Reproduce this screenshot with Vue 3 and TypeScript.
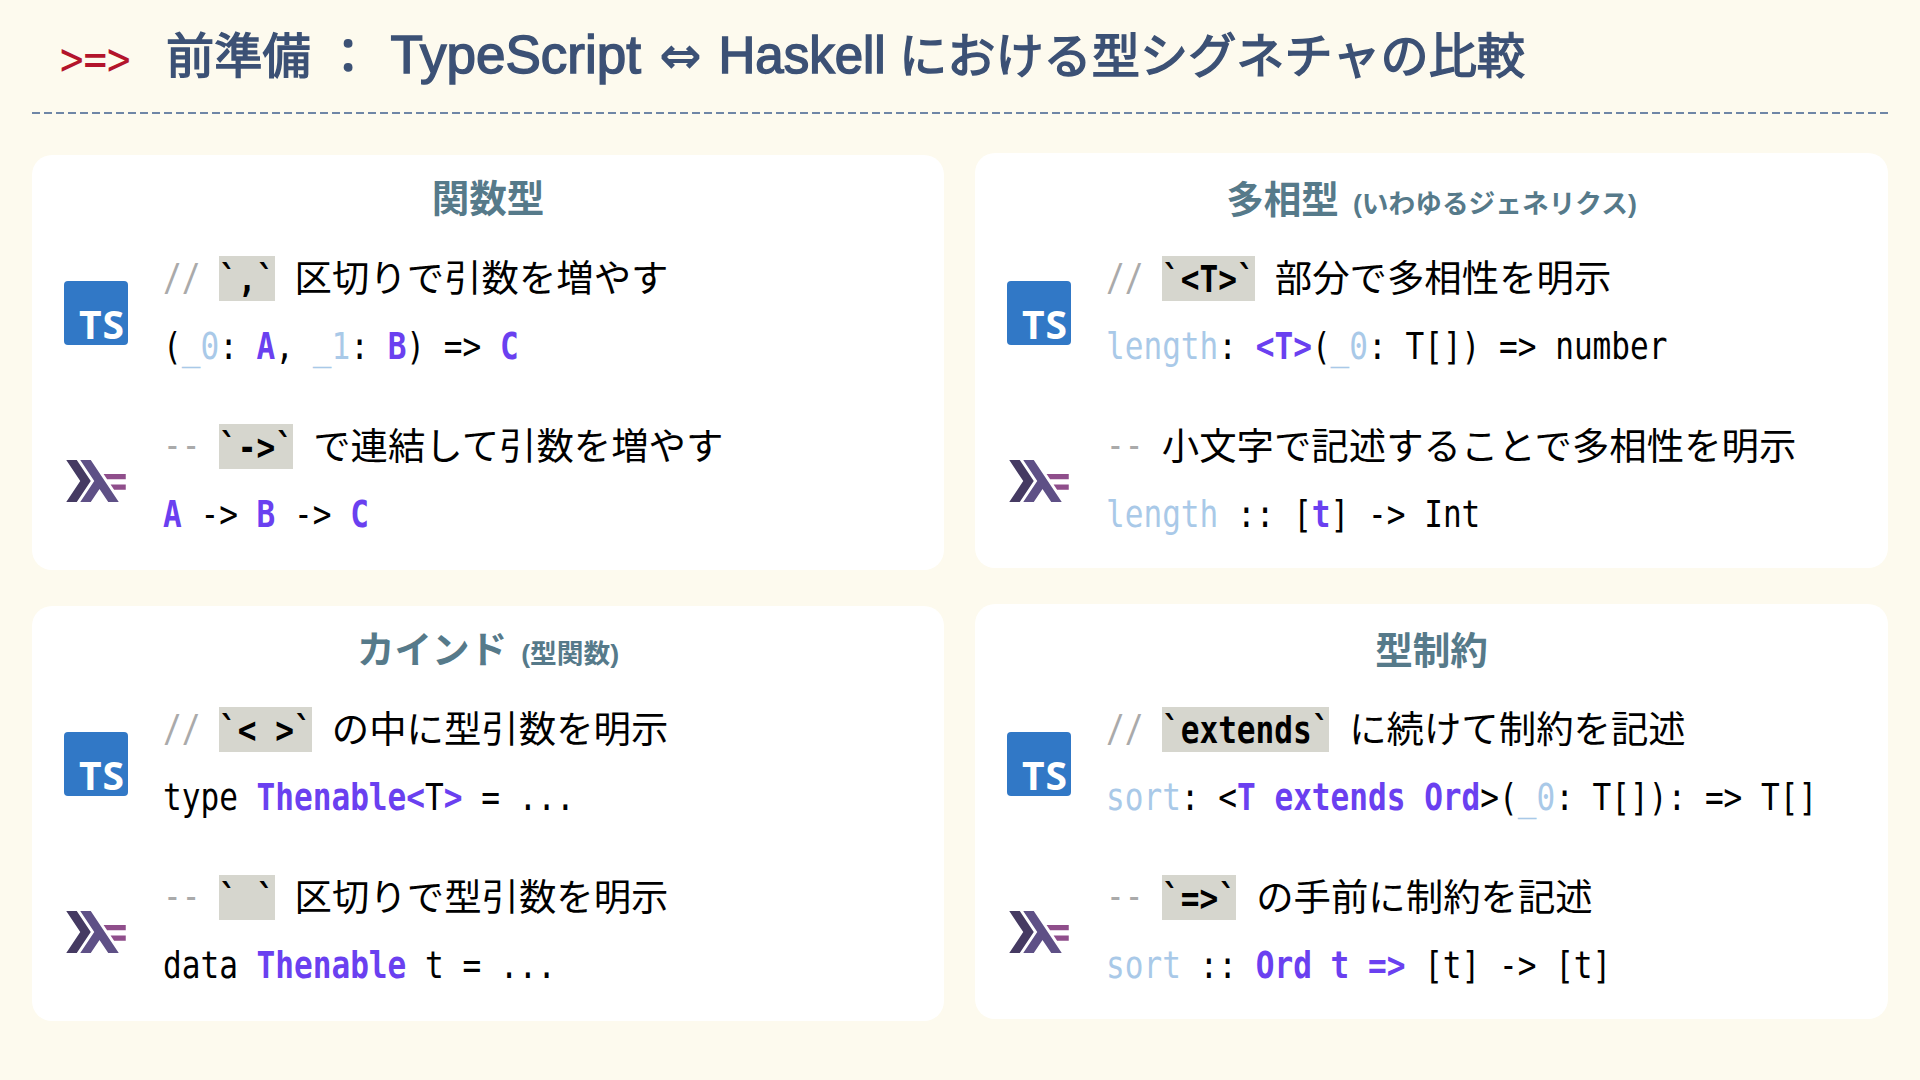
<script setup lang="ts">
type Tok = [string, string?]
interface Line {
  lang: 'ts' | 'hs'
  mark: string
  badge?: string
  text: string
  code: Tok[]
}
interface Card {
  title: string
  sub?: string
  right: boolean
  lines: Line[]
}

const CH = 18.6

const cards: Card[] = [
  {
    title: '関数型', right: false,
    lines: [
      { lang: 'ts', mark: '//', badge: '`,`', text: '区切りで引数を増やす',
        code: [['('], ['_0', 'l'], [': '], ['A', 'p'], [', '], ['_1', 'l'], [': '], ['B', 'p'], [') => '], ['C', 'p']] },
      { lang: 'hs', mark: '--', badge: '`->`', text: 'で連結して引数を増やす',
        code: [['A', 'p'], [' -> '], ['B', 'p'], [' -> '], ['C', 'p']] },
    ],
  },
  {
    title: '多相型', sub: '(いわゆるジェネリクス)', right: true,
    lines: [
      { lang: 'ts', mark: '//', badge: '`<T>`', text: '部分で多相性を明示',
        code: [['length', 'l'], [': '], ['<T>', 'p'], ['('], ['_0', 'l'], [': T[]) => number']] },
      { lang: 'hs', mark: '--', text: '小文字で記述することで多相性を明示',
        code: [['length', 'l'], [' :: ['], ['t', 'p'], ['] -> Int']] },
    ],
  },
  {
    title: 'カインド', sub: '(型関数)', right: false,
    lines: [
      { lang: 'ts', mark: '//', badge: '`< >`', text: 'の中に型引数を明示',
        code: [['type '], ['Thenable<', 'p'], ['T'], ['>', 'p'], [' = ...']] },
      { lang: 'hs', mark: '--', badge: '` `', text: '区切りで型引数を明示',
        code: [['data '], ['Thenable', 'p'], [' t = ...']] },
    ],
  },
  {
    title: '型制約', right: true,
    lines: [
      { lang: 'ts', mark: '//', badge: '`extends`', text: 'に続けて制約を記述',
        code: [['sort', 'l'], [': <'], ['T extends Ord', 'p'], ['>('], ['_0', 'l'], [': T[]): => T[]']] },
      { lang: 'hs', mark: '--', badge: '`=>`', text: 'の手前に制約を記述',
        code: [['sort', 'l'], [' :: '], ['Ord t =>', 'p'], [' [t] -> [t]']] },
    ],
  },
]

const badgeWidth = (b: string) => ({ width: `${b.length * CH}px` })
</script>

<template>
  <div class="slide">
    <header class="head">
      <span class="arrow"><span class="arrow-in">&gt;=&gt;</span></span>
      <h1 class="title">前準備&nbsp;：&nbsp;<span class="lat ts-word">TypeScript</span> <span class="dbl">⇔</span> <span class="lat hs-word">Haskell</span> における型シグネチャの比較</h1>
    </header>
    <div class="rule"></div>
    <main class="grid">
      <section v-for="c in cards" :key="c.title" class="card" :class="{ right: c.right }">
        <h2 class="card-title">{{ c.title }}<small v-if="c.sub" class="sub">{{ c.sub }}</small></h2>
        <div class="rows">
          <div v-for="l in c.lines" :key="l.text" class="row">
            <div class="icon-cell">
              <div v-if="l.lang === 'ts'" class="ts"><span>TS</span></div>
              <svg v-else class="hs" viewBox="0 0 17 12" aria-label="Haskell">
                <path d="M0 12l4-6-4-6h3l4 6-4 6z" fill="#453a62" />
                <path d="M4 12l4-6-4-6h3l8 12h-3l-2.5-3.75L7 12z" fill="#5e5086" />
                <path d="M13.67 8.5l-1-1.5H17v1.5zM11.67 5.5l-1-1.5H17v1.5z" fill="#8f4e8b" />
              </svg>
            </div>
            <div class="body">
              <div class="comment">
                <span class="mark"><span class="mono">{{ l.mark }}</span></span>
                <span v-if="l.badge" class="badge" :style="badgeWidth(l.badge)"><span class="mono">{{ l.badge }}</span></span>
                <span class="jp">{{ l.text }}</span>
              </div>
              <div class="code"><span class="mono"><span v-for="(t, i) in l.code" :key="i" :class="t[1]">{{ t[0] }}</span></span></div>
            </div>
          </div>
        </div>
      </section>
    </main>
  </div>
</template>

<style>
html, body { margin: 0; background: #fdfaee; }
</style>

<style scoped>
.slide {
  width: 1920px;
  height: 1080px;
  box-sizing: border-box;
  padding: 0 32px;
  overflow: hidden;
  background: #fdfaee;
  font-family: "Liberation Sans", "Noto Sans CJK JP", sans-serif;
  color: #000;
}
.head {
  height: 112px;
  display: flex;
  align-items: center;
  padding: 0 0 9px 24px;
  box-sizing: border-box;
}
.arrow {
  width: 110px;
  flex: none;
  margin-top: 14px;
  color: #b3142c;
}
.arrow-in {
  display: inline-block;
  margin-left: 4px;
  font: 46px/50px "DejaVu Sans Mono", monospace;
  transform: scaleX(0.85);
  transform-origin: left center;
}
.title {
  margin: 0;
  font-size: 48.2px;
  font-weight: 400;
  color: #3c5175;
  white-space: nowrap;
  -webkit-text-stroke: 1.5px #3c5175;
}
.lat {
  font-weight: 400;
}
.ts-word {
  font-size: 53px;
  margin-left: 5px;
}
.hs-word {
  font-size: 51px;
  margin-left: 3px;
}
.dbl {
  font-family: "DejaVu Sans", sans-serif;
  font-size: 51px;
  font-weight: 700;
  margin-left: 5px;
  -webkit-text-stroke: 0;
}
.rule {
  height: 2px;
  background: repeating-linear-gradient(90deg, #6f86a6 0 8px, transparent 8px 12px);
}
.grid {
  display: grid;
  grid-template-columns: 912px 913px;
  column-gap: 31px;
  margin-top: 41px;
  row-gap: 36px;
}
.card {
  background: #fff;
  border-radius: 20px;
  box-sizing: border-box;
  height: 415px;
  padding: 21px 32px 0;
}
.card.right {
  margin-top: -2px;
  padding-top: 24px;
}
.card-title {
  margin: 0 0 34px;
  height: 46px;
  line-height: 46px;
  text-align: center;
  font-size: 37.6px;
  font-weight: 700;
  color: #567a8a;
}
.right .card-title {
  margin-bottom: 33px;
}
.sub {
  font-size: 26.7px;
  margin-left: 14px;
  font-weight: 700;
}
.rows {
  display: flex;
  flex-direction: column;
  gap: 55px;
}
.row {
  display: flex;
  align-items: center;
  gap: 35px;
}
.icon-cell {
  width: 64px;
  flex: none;
  display: flex;
  justify-content: center;
}
.ts {
  width: 64px;
  height: 64px;
  margin-top: 1.5px;
  border-radius: 4px;
  background: #3178c6;
  color: #fff;
  display: flex;
  align-items: flex-end;
  justify-content: flex-end;
  box-sizing: border-box;
  padding: 0 3px 2px 0;
  font: 700 39px/38px "Open Sans", sans-serif;
  letter-spacing: 1px;
}
.hs {
  width: 60px;
  height: 42px;
  display: block;
}
.body {
  min-width: 0;
}
.comment {
  height: 45px;
  display: flex;
  align-items: center;
  margin-bottom: 22px;
}
.mark {
  width: 55.8px;
  flex: none;
  margin-top: -4px;
  color: #aaa;
}
.badge {
  flex: none;
  height: 45px;
  background: #d6d6ce;
  font-weight: 700;
  margin-right: 20px;
  display: flex;
  align-items: center;
}
.mono {
  display: inline-block;
  flex: none;
  font-family: "DejaVu Sans Mono", monospace;
  font-size: 38px;
  line-height: 46px;
  white-space: pre;
  transform: scaleX(0.818);
  transform-origin: left center;
}
.jp {
  margin-top: -4px;
  font-family: "Noto Sans CJK JP", sans-serif;
  font-size: 37.4px;
  line-height: 45px;
  white-space: nowrap;
}
.code {
  height: 46px;
  line-height: 46px;
  white-space: nowrap;
}
.p { color: #6a40f0; font-weight: 700; }
.l { color: #a9c9e8; }
</style>
